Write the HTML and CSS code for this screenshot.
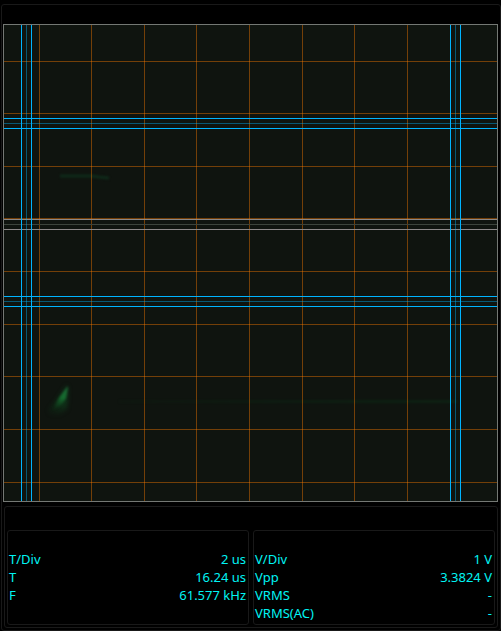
FILE: index.html
```html
<!DOCTYPE html>
<html lang="en">
<head>
<meta charset="utf-8">
<title>Oscilloscope</title>
<link rel="stylesheet" href="styles.css">
</head>
<body>
<main class="scope">
  <svg class="plot" viewBox="0 0 495 478" role="img" aria-label="Signal trace">
    <defs>
      <linearGradient id="flare" gradientUnits="userSpaceOnUse" x1="65" y1="362" x2="52" y2="388">
        <stop offset="0" stop-color="#1d6a38"/>
        <stop offset="0.45" stop-color="#166a2e"/>
        <stop offset="1" stop-color="#0d3016" stop-opacity="0"/>
      </linearGradient>
      <linearGradient id="haze" gradientUnits="userSpaceOnUse" x1="64" y1="362" x2="54" y2="392">
        <stop offset="0" stop-color="#124a24" stop-opacity="0.7"/>
        <stop offset="0.5" stop-color="#0f4a20" stop-opacity="0.65"/>
        <stop offset="1" stop-color="#0d3016" stop-opacity="0.15"/>
      </linearGradient>
      <linearGradient id="trail" x1="0" x2="1">
        <stop offset="0" stop-color="#0c3018" stop-opacity="0.1"/>
        <stop offset="0.7" stop-color="#0c3018" stop-opacity="0.4"/>
        <stop offset="1" stop-color="#0c3018" stop-opacity="0.5"/>
      </linearGradient>
    </defs>
    <rect class="screen" width="495" height="478"/>
    <g class="trace">
      <path class="pulse" d="M57 152H88L96 153L106 154"/>
      <path class="glow" d="M64 361L65 366L64 385L56 391L46 390L46 385L54 376Z"/>
      <path class="beam" d="M65 362L63 374L57 382L49 387L56 374Z"/>
      <rect class="tail" x="116" y="376" width="338" height="3"/>
    </g>
    <path class="grid" d="M36.5 0V478M88.5 0V478M141.5 0V478M193.5 0V478M246.5 0V478M299.5 0V478M351.5 0V478M404.5 0V478M0 37.5H495M0 89.5H495M0 142.5H495M0 194.5H495M0 247.5H495M0 300.5H495M0 352.5H495M0 405.5H495M0 458.5H495"/>
    <path class="zero-mid" d="M0 200.5H495"/>
    <path class="zero" d="M0 195.5H495M0 205.5H495"/>
    <path class="cursor-mid" d="M23.5 0V478M452.5 0V478M0 99.5H495M0 277.5H495"/>
    <path class="cursor" d="M18.5 0V478M28.5 0V478M447.5 0V478M457.5 0V478M0 94.5H495M0 104.5H495M0 272.5H495M0 282.5H495"/>
    <rect class="edge" x="0.5" y="0.5" width="494" height="477"/>
  </svg>
  <section class="readout">
    <div class="group">
      <table>
        <tr><th scope="row">T/Div</th><td>2 us</td></tr>
        <tr><th scope="row">T</th><td>16.24 us</td></tr>
        <tr><th scope="row">F</th><td>61.577 kHz</td></tr>
      </table>
    </div>
    <div class="group">
      <table>
        <tr><th scope="row">V/Div</th><td>1 V</td></tr>
        <tr><th scope="row">Vpp</th><td>3.3824 V</td></tr>
        <tr><th scope="row">VRMS</th><td>-</td></tr>
        <tr><th scope="row">VRMS(AC)</th><td>-</td></tr>
      </table>
    </div>
  </section>
</main>
</body>
</html>
```
FILE: styles.css
```css
* {
  box-sizing: border-box;
}

body {
  margin: 0;
  padding: 4px 0 0 1px;
  background: #000;
  color: #00f4f4;
  font: 13px/18px "Noto Sans", sans-serif;
}

.scope {
  padding: 19px 2px 2px 1px;
  border: 1px solid #191919;
  border-radius: 3px;
}

.plot {
  display: block;
  width: 100%;
  height: auto;
}

.screen {
  fill: #0f140f;
}

.plot path {
  fill: none;
  stroke-width: 1;
}

.plot .grid {
  stroke: #ff7b00;
  stroke-opacity: 0.42;
}

.plot .zero {
  stroke: #8c8888;
}

.plot .zero-mid {
  stroke: #3c443c;
}

.plot .cursor {
  stroke: #00b4ff;
}

.plot .cursor-mid {
  stroke: #00b4ff;
  stroke-opacity: 0.42;
}

.edge {
  fill: none;
  stroke: #747874;
}

.plot .pulse {
  stroke: #0f2a1a;
  stroke-width: 3;
  filter: blur(1px);
}

.plot .glow {
  fill: url(#haze);
  filter: blur(2px);
}

.plot .beam {
  fill: url(#flare);
  filter: blur(1px);
}

.tail {
  fill: url(#trail);
  filter: blur(1px);
}

.readout {
  display: grid;
  grid-template-columns: 1fr 1fr;
  gap: 4px;
  margin: 4px 0 0 1px;
  padding: 23px 2px 2px;
  border: 1px solid #191919;
  border-radius: 3px;
}

.group {
  padding: 19px 2px 2px 1px;
  border: 1px solid #191919;
  border-radius: 3px;
}

table {
  width: 100%;
  border-collapse: collapse;
}

th,
td {
  padding: 0;
  font-weight: 400;
  text-align: left;
}

td {
  text-align: right;
}
```
